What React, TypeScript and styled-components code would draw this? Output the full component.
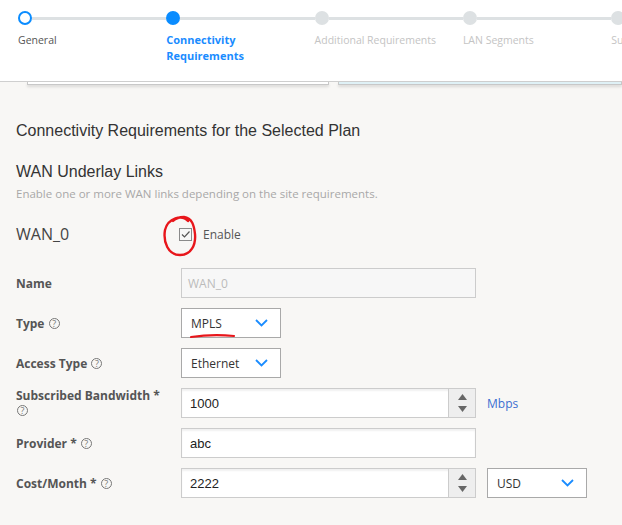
import React from "react";
import styled, { createGlobalStyle } from "styled-components";

const GlobalStyle = createGlobalStyle`
  html, body {
    margin: 0;
    padding: 0;
    background: #f8f7f5;
    font-family: "Open Sans", "Liberation Sans", sans-serif;
    overflow: hidden;
  }
`;

const steps = [
  { label: "General", state: "done" },
  { label: "Connectivity Requirements", state: "active" },
  { label: "Additional Requirements", state: "todo" },
  { label: "LAN Segments", state: "todo" },
  { label: "Summary", state: "todo" },
] as const;

type StepState = "done" | "active" | "todo";

const Help = () => <HelpIcon>?</HelpIcon>;

const Chevron = () => (
  <svg width="13" height="8" viewBox="0 0 13 8">
    <path d="M1 1 L6.5 6.5 L12 1" fill="none" stroke="#1a8cff" strokeWidth="1.8" />
  </svg>
);

const Spinner = () => (
  <SpinBox>
    <svg width="9" height="6" viewBox="0 0 9 6">
      <path d="M0 6 L4.5 0 L9 6 Z" fill="#666" />
    </svg>
    <svg width="9" height="6" viewBox="0 0 9 6">
      <path d="M0 0 L4.5 6 L9 0 Z" fill="#666" />
    </svg>
  </SpinBox>
);

export default function App() {
  return (
    <Page>
      <GlobalStyle />
      <Header>
        <Stepper>
          {steps.map((s) => (
            <Step key={s.label}>
              <Track>
                <Dot $state={s.state} />
                <Line />
              </Track>
              <StepLabel $state={s.state}>{s.label}</StepLabel>
            </Step>
          ))}
        </Stepper>
      </Header>
      <CardEdges>
        <CardEdge />
        <CardEdge $tint />
      </CardEdges>

      <Content>
        <Title>Connectivity Requirements for the Selected Plan</Title>
        <SectionTitle>WAN Underlay Links</SectionTitle>
        <Helper>Enable one or more WAN links depending on the site requirements.</Helper>

        <WanRow>
          <WanName>WAN_0</WanName>
          <CheckWrap>
            <Check>
              <svg width="11" height="11" viewBox="0 0 11 11">
                <path d="M2 5.5 L4.5 8 L9.5 2.5" fill="none" stroke="#555" strokeWidth="1.2" />
              </svg>
            </Check>
            <CheckText>Enable</CheckText>
          </CheckWrap>
        </WanRow>

        <Form>
          <Label>Name</Label>
          <Field>
            <TextBox $disabled>
              <Placeholder>WAN_0</Placeholder>
            </TextBox>
          </Field>

          <Label>
            Type <Help />
          </Label>
          <Field>
            <Select>
              MPLS
              <Chevron />
            </Select>
          </Field>

          <Label>
            Access Type <Help />
          </Label>
          <Field>
            <Select>
              Ethernet
              <Chevron />
            </Select>
          </Field>

          <Label>
            Subscribed Bandwidth * <Help />
          </Label>
          <Field>
            <TextBox>
              <Value>1000</Value>
              <Spinner />
            </TextBox>
            <Unit>Mbps</Unit>
          </Field>

          <Label>
            Provider * <Help />
          </Label>
          <Field>
            <TextBox>
              <Value>abc</Value>
            </TextBox>
          </Field>

          <Label>
            Cost/Month * <Help />
          </Label>
          <Field>
            <TextBox>
              <Value>2222</Value>
              <Spinner />
            </TextBox>
            <Select>
              USD
              <Chevron />
            </Select>
          </Field>
        </Form>
      </Content>

      <Marks width="622" height="525" viewBox="0 0 622 525">
        <path
          d="M188 221 C182 214 168 218 165 230 C163 242 168 255 180 255 C191 255 196 245 195 234 C194 225 192 218 184 217 C179 217 175 219 173 221"
          fill="none"
          stroke="#e8161b"
          strokeWidth="2.4"
          strokeLinecap="round"
        />
        <path d="M191 337 Q 212 334 234 336" fill="none" stroke="#e8161b" strokeWidth="2.2" strokeLinecap="round" />
      </Marks>
    </Page>
  );
}

const Page = styled.div`
  position: relative;
  width: 622px;
  height: 525px;
  overflow: hidden;
`;

const Header = styled.div`
  height: 82px;
  background: #fff;
  border-bottom: 1px solid #cfcfcf;
  box-sizing: border-box;
  padding: 11px 0 0 18px;
  overflow: hidden;
`;

const Stepper = styled.div`
  display: flex;
`;

const Step = styled.div`
  width: 148.3px;
  flex-shrink: 0;
`;

const Track = styled.div`
  display: flex;
  align-items: center;
  height: 14px;
`;

const Dot = styled.div<{ $state: StepState }>`
  width: 14px;
  height: 14px;
  box-sizing: border-box;
  border-radius: 50%;
  flex-shrink: 0;
  background: ${(p) => (p.$state === "active" ? "#0a8cff" : p.$state === "done" ? "#fff" : "#dde1e3")};
  border: ${(p) => (p.$state === "done" ? "2px solid #0a8cff" : "none")};
`;

const Line = styled.div`
  flex: 1;
  height: 3px;
  background: #dde1e3;
`;

const StepLabel = styled.div<{ $state: StepState }>`
  margin-top: 7px;
  font-size: ${(p) => (p.$state === "active" ? "11px" : "10.5px")};
  line-height: 16px;
  width: 100px;
  font-weight: ${(p) => (p.$state === "active" ? 700 : 400)};
  color: ${(p) => (p.$state === "active" ? "#1a8cff" : p.$state === "done" ? "#555" : "#c4c4c4")};
  white-space: ${(p) => (p.$state === "active" ? "normal" : "nowrap")};
`;

const CardEdges = styled.div`
  display: flex;
  gap: 9px;
  padding-left: 27px;
  height: 3px;
`;

const CardEdge = styled.div<{ $tint?: boolean }>`
  width: ${(p) => (p.$tint ? "auto" : "302px")};
  flex: ${(p) => (p.$tint ? 1 : "none")};
  height: 3px;
  box-sizing: border-box;
  border: 1px solid #c8c8c8;
  border-top: none;
  background: ${(p) => (p.$tint ? "#dff1f6" : "#fff")};
  box-shadow: 0 2px 3px rgba(0, 0, 0, 0.12);
`;

const Content = styled.div`
  padding: 0 16px;
`;

const Title = styled.div`
  margin-top: 36px;
  font-family: "Liberation Sans", Arial, sans-serif;
  font-size: 16px;
  line-height: 20px;
  color: #333;
`;

const SectionTitle = styled.div`
  margin-top: 21px;
  font-family: "Liberation Sans", Arial, sans-serif;
  font-size: 16px;
  line-height: 20px;
  color: #333;
`;

const Helper = styled.div`
  margin-top: 4px;
  font-size: 11.5px;
  line-height: 16px;
  color: #a8a8a8;
`;

const WanRow = styled.div`
  margin-top: 21px;
  display: grid;
  grid-template-columns: 163px auto;
  align-items: center;
  height: 20px;
`;

const WanName = styled.div`
  font-size: 16px;
  color: #444;
`;

const CheckWrap = styled.div`
  display: flex;
  align-items: center;
  gap: 11px;
`;

const Check = styled.div`
  width: 13px;
  height: 13px;
  box-sizing: border-box;
  border: 1px solid #8a8a8a;
  background: #f7f7f7;
  display: flex;
  align-items: center;
  justify-content: center;
`;

const CheckText = styled.span`
  font-size: 12px;
  color: #555;
`;

const Form = styled.div`
  margin-top: 25px;
  display: grid;
  grid-template-columns: 165px auto;
  row-gap: 10px;
  align-items: center;
`;

const Label = styled.div`
  width: 150px;
  font-size: 12px;
  line-height: 15px;
  font-weight: 700;
  color: #555;
`;

const HelpIcon = styled.span`
  display: inline-flex;
  align-items: center;
  justify-content: center;
  width: 11px;
  height: 11px;
  box-sizing: border-box;
  border: 1px solid #777;
  border-radius: 50%;
  font-size: 9px;
  font-weight: 400;
  color: #777;
  line-height: 1;
  vertical-align: middle;
  position: relative;
  top: -1px;
  margin-left: 1px;
`;

const Field = styled.div`
  display: flex;
  align-items: center;
  gap: 11px;
  height: 30px;
`;

const TextBox = styled.div<{ $disabled?: boolean }>`
  width: 295px;
  height: 30px;
  box-sizing: border-box;
  border: 1px solid #ccc;
  background: ${(p) => (p.$disabled ? "#f7f7f7" : "#fff")};
  box-shadow: ${(p) => (p.$disabled ? "none" : "inset 0 2px 2px rgba(0,0,0,0.06)")};
  display: flex;
  align-items: stretch;
  font-family: "Liberation Sans", Arial, sans-serif;
  font-size: 13px;
`;

const Value = styled.div`
  flex: 1;
  display: flex;
  align-items: center;
  padding-left: 8px;
  color: #222;
`;

const Placeholder = styled(Value)`
  color: #bbb;
  font-family: "Open Sans", sans-serif;
  font-size: 12px;
  padding-left: 6px;
`;

const SpinBox = styled.div`
  width: 26px;
  background: #eee;
  border-left: 1px solid #ccc;
  display: flex;
  flex-direction: column;
  align-items: center;
  justify-content: center;
  gap: 6px;
`;

const Unit = styled.span`
  font-size: 12px;
  color: #3b6fd1;
`;

const Select = styled.div`
  width: 100px;
  height: 30px;
  box-sizing: border-box;
  border: 1px solid #a9a9a9;
  background: #fff;
  display: flex;
  align-items: center;
  justify-content: space-between;
  padding: 0 12px 0 9px;
  font-size: 12px;
  color: #333;
`;

const Marks = styled.svg`
  position: absolute;
  left: 0;
  top: 0;
  pointer-events: none;
`;
